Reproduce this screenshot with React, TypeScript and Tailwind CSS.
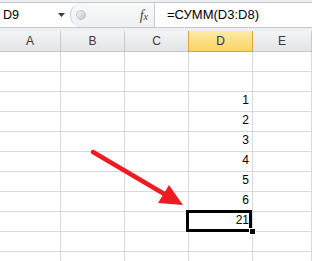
import React from "react";

const cols = [
  { name: "A", w: "w-[61px]" },
  { name: "B", w: "w-[64px]" },
  { name: "C", w: "w-[64px]" },
  { name: "D", w: "w-[64px]" },
  { name: "E", w: "w-[59px]" },
];

// column D values by row number
const values: Record<number, string> = { 3: "1", 4: "2", 5: "3", 6: "4", 7: "5", 8: "6", 9: "21" };
const rows = [1, 2, 3, 4, 5, 6, 7, 8, 9, 10, 11];

const FormulaBar = () => (
  <div className="bg-[#eef0f3] pt-[2px] pb-[3px]">
    <div className="flex h-[26px] border-y border-[#c4c7cc] bg-white">
      <div className="flex w-[70px] items-center justify-between pl-[3px] pr-[5px]">
        <span className="text-[12.5px] text-black">D9</span>
        <svg width="7" height="4" viewBox="0 0 7 4">
          <path d="M0 0h7L3.5 4z" fill="#3c3c3c" />
        </svg>
      </div>
      <div className="relative flex w-[84px] items-center justify-between rounded-l-[13px] border-l border-[#c8cbd0] bg-gradient-to-b from-[#fafafa] to-[#eef0f2] pl-[5px] pr-[6px]">
        <div className="h-[10px] w-[10px] rounded-full border border-[#c2c4c8] bg-gradient-to-br from-[#f4f4f4] to-[#c4c6ca]" />
        <span className="font-['Liberation_Serif',serif] text-[14px] italic text-[#444]">
          f<span className="text-[10px]">x</span>
        </span>
      </div>
      <div className="w-px bg-[#c8cbd0]" />
      <div className="flex items-center pl-[12px] text-[13px] text-black">=СУММ(D3:D8)</div>
    </div>
  </div>
);

const Header = () => (
  <div className="flex h-[21px] border-b border-[#c6c6c6] bg-gradient-to-b from-[#f4f5f6] to-[#e3e4e6]">
    {cols.map((c) =>
      c.name === "D" ? (
        <div
          key={c.name}
          className="-mb-px -ml-px flex w-[65px] items-center justify-center border-x border-b border-[#e0a23c] bg-gradient-to-b from-[#fdeaa3] to-[#fbd463] text-[#333]"
        >
          {c.name}
        </div>
      ) : (
        <div key={c.name} className={`${c.w} flex items-center justify-center border-r border-[#c9cacc] text-[#3a3a3a]`}>
          {c.name}
        </div>
      )
    )}
  </div>
);

export default function App() {
  return (
    <div className="relative h-[261px] w-[312px] overflow-hidden bg-white font-['Liberation_Sans',Arial,sans-serif] text-[12px]">
      <FormulaBar />
      <Header />
      <div>
        {rows.map((r) => (
          <div key={r} className="flex h-[20px] border-b border-[#d9d9d9]">
            {cols.map((c) => (
              <div
                key={c.name}
                className={`${c.w} relative flex items-end justify-end border-r border-[#d9d9d9] pb-[2px] pr-[3px] text-black`}
              >
                {c.name === "D" ? values[r] : null}
                {c.name === "D" && r === 9 ? (
                  <>
                    <div className="absolute -left-[3px] -top-[2px] z-10 h-[22px] w-[66px] border-[3px] border-black" />
                    <div className="absolute -bottom-[4px] -right-[4px] z-20 h-[7px] w-[7px] border border-white bg-black" />
                  </>
                ) : null}
              </div>
            ))}
          </div>
        ))}
      </div>
      <svg className="absolute left-0 top-0 z-30" width="312" height="261" viewBox="0 0 312 261">
        <line x1="93" y1="152" x2="166" y2="195" stroke="#ed1c24" strokeWidth="4.5" strokeLinecap="round" />
        <polygon points="183,205 169,185 158,203" fill="#ed1c24" />
      </svg>
    </div>
  );
}
